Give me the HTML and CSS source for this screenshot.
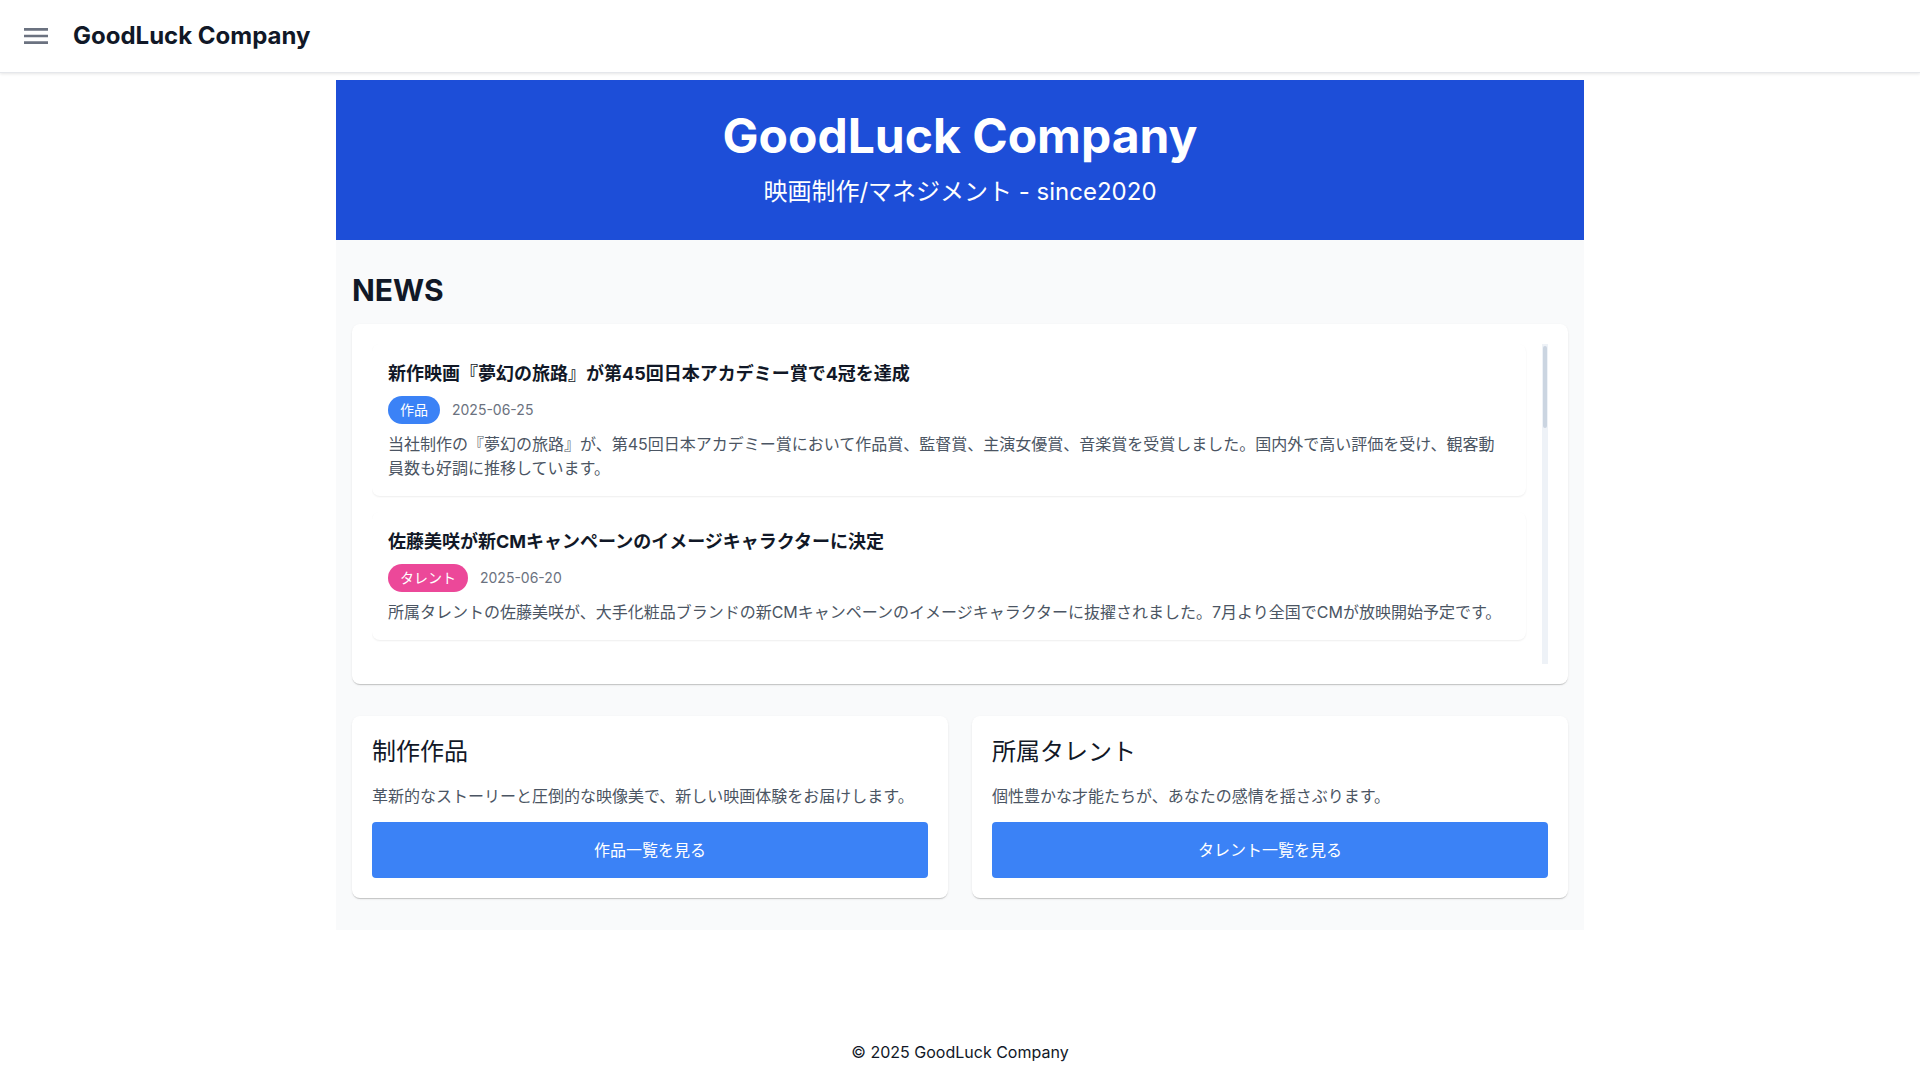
FILE: index.html
```html
<!DOCTYPE html>
<html lang="ja">
<head>
<meta charset="utf-8">
<title>GoodLuck Company</title>
<link rel="stylesheet" href="styles.css">
</head>
<body>
<div class="page">
  <header class="appbar">
    <button class="menu-btn" aria-label="menu">
      <svg viewBox="0 0 24 24" width="32" height="32"><path d="M3 18h18v-2H3v2zm0-5h18v-2H3v2zm0-7v2h18V6H3z" fill="#6b7280"/></svg>
    </button>
    <span class="brand">GoodLuck Company</span>
  </header>

  <main class="main">
    <div class="container">
      <section class="hero">
        <h1 class="hero-title">GoodLuck Company</h1>
        <p class="hero-sub">映画制作/マネジメント - since2020</p>
      </section>

      <div class="content">
        <h2 class="section-title">NEWS</h2>
        <div class="news-card">
          <div class="news-scroll">
            <article class="news-item">
              <h3 class="news-title">新作映画『夢幻の旅路』が第45回日本アカデミー賞で4冠を達成</h3>
              <div class="news-meta"><span class="tag tag-work">作品</span><span class="date">2025-06-25</span></div>
              <p class="news-desc">当社制作の『夢幻の旅路』が、第45回日本アカデミー賞において作品賞、監督賞、主演女優賞、音楽賞を受賞しました。国内外で高い評価を受け、観客動員数も好調に推移しています。</p>
            </article>
            <article class="news-item">
              <h3 class="news-title">佐藤美咲が新CMキャンペーンのイメージキャラクターに決定</h3>
              <div class="news-meta"><span class="tag tag-talent">タレント</span><span class="date">2025-06-20</span></div>
              <p class="news-desc">所属タレントの佐藤美咲が、大手化粧品ブランドの新CMキャンペーンのイメージキャラクターに抜擢されました。7月より全国でCMが放映開始予定です。</p>
            </article>
          </div>
          <div class="scrollbar" aria-hidden="true"><div class="scrollbar-thumb"></div></div>
        </div>

        <div class="cards">
          <div class="card">
            <h3 class="card-title">制作作品</h3>
            <p class="card-desc">革新的なストーリーと圧倒的な映像美で、新しい映画体験をお届けします。</p>
            <button class="card-btn">作品一覧を見る</button>
          </div>
          <div class="card">
            <h3 class="card-title">所属タレント</h3>
            <p class="card-desc">個性豊かな才能たちが、あなたの感情を揺さぶります。</p>
            <button class="card-btn">タレント一覧を見る</button>
          </div>
        </div>
      </div>
    </div>
  </main>

  <footer class="footer">© 2025 GoodLuck Company</footer>
</div>
</body>
</html>
```

FILE: styles.css
```css
* { box-sizing: border-box; }

html, body {
  margin: 0;
  padding: 0;
}

body {
  font-family: Inter, "Noto Sans CJK JP", sans-serif;
  color: #111827;
  background: #ffffff;
}

.page {
  min-height: 100vh;
  display: flex;
  flex-direction: column;
}

.appbar {
  height: 72px;
  display: flex;
  align-items: center;
  padding: 0 16px;
  background: #ffffff;
  box-shadow: 0 1px 0 #e5e7eb, 0 2px 3px rgba(0, 0, 0, 0.1);
  position: relative;
  z-index: 2;
}

.menu-btn {
  width: 40px;
  height: 40px;
  padding: 4px;
  border: 0;
  background: none;
  display: flex;
  align-items: center;
  justify-content: center;
  cursor: pointer;
}

.brand {
  margin-left: 17px;
  font-size: 24px;
  line-height: 32px;
  font-weight: 700;
  color: #111827;
}

.main {
  flex: 1;
  padding-top: 8px;
}

.container {
  width: 1248px;
  margin: 0 auto;
}

.hero {
  background: #1d4ed8;
  color: #ffffff;
  text-align: center;
  padding: 32px 16px;
}

.hero-title {
  margin: 0;
  font-size: 48px;
  line-height: 48px;
  font-weight: 700;
}

.hero-sub {
  margin: 16px 0 0;
  font-size: 24px;
  line-height: 32px;
}

.content {
  background: #f9fafb;
  padding: 32px 16px;
}

.section-title {
  margin: 0 0 16px;
  font-size: 30px;
  line-height: 36px;
  font-weight: 700;
}

.news-card,
.card {
  background: #ffffff;
  border-radius: 8px;
  box-shadow: 0 2px 1px -1px rgba(0, 0, 0, 0.12), 0 1px 1px 0 rgba(0, 0, 0, 0.08), 0 1px 3px 0 rgba(0, 0, 0, 0.06);
}

.news-card {
  padding: 20px;
  display: flex;
}

.news-scroll {
  flex: 1;
  height: 320px;
  overflow: hidden;
  padding-right: 16px;
  display: flex;
  flex-direction: column;
  gap: 16px;
}

.scrollbar {
  width: 6px;
  height: 320px;
  background: #eef2f7;
  padding: 2px 1px;
}

.scrollbar-thumb {
  height: 82px;
  border-radius: 3px;
  background: #cbd5e1;
}

.news-item {
  flex-shrink: 0;
  background: #ffffff;
  border-radius: 8px;
  padding: 16px;
  box-shadow: 0 1px 2px rgba(0, 0, 0, 0.07);
}

.news-title {
  margin: 0 0 8px;
  font-size: 18px;
  line-height: 28px;
  font-weight: 700;
  color: #111827;
}

.news-meta {
  display: flex;
  align-items: center;
  gap: 12px;
}

.tag {
  padding: 4px 12px;
  border-radius: 9999px;
  font-size: 14px;
  line-height: 20px;
  color: #ffffff;
}

.tag-work { background: #3b82f6; }
.tag-talent { background: #ec4899; }

.date {
  font-size: 14px;
  line-height: 20px;
  color: #6b7280;
}

.news-desc {
  margin: 8px 0 0;
  font-size: 16px;
  line-height: 24px;
  color: #4b5563;
}

.cards {
  display: grid;
  grid-template-columns: 1fr 1fr;
  gap: 24px;
  margin-top: 32px;
}

.card {
  padding: 20px;
}

.card-title {
  margin: 0 0 16px;
  font-size: 24px;
  line-height: 32px;
  font-weight: 400;
  color: #111827;
}

.card-desc {
  margin: 0 0 14px;
  font-size: 16px;
  line-height: 24px;
  color: #4b5563;
}

.card-btn {
  display: block;
  width: 100%;
  padding: 16px;
  border: 0;
  border-radius: 4px;
  background: #3b82f6;
  color: #ffffff;
  font-family: inherit;
  font-size: 16px;
  line-height: 24px;
  cursor: pointer;
}

.footer {
  padding: 16px;
  text-align: center;
  font-size: 16px;
  line-height: 24px;
  color: #111827;
}
```
